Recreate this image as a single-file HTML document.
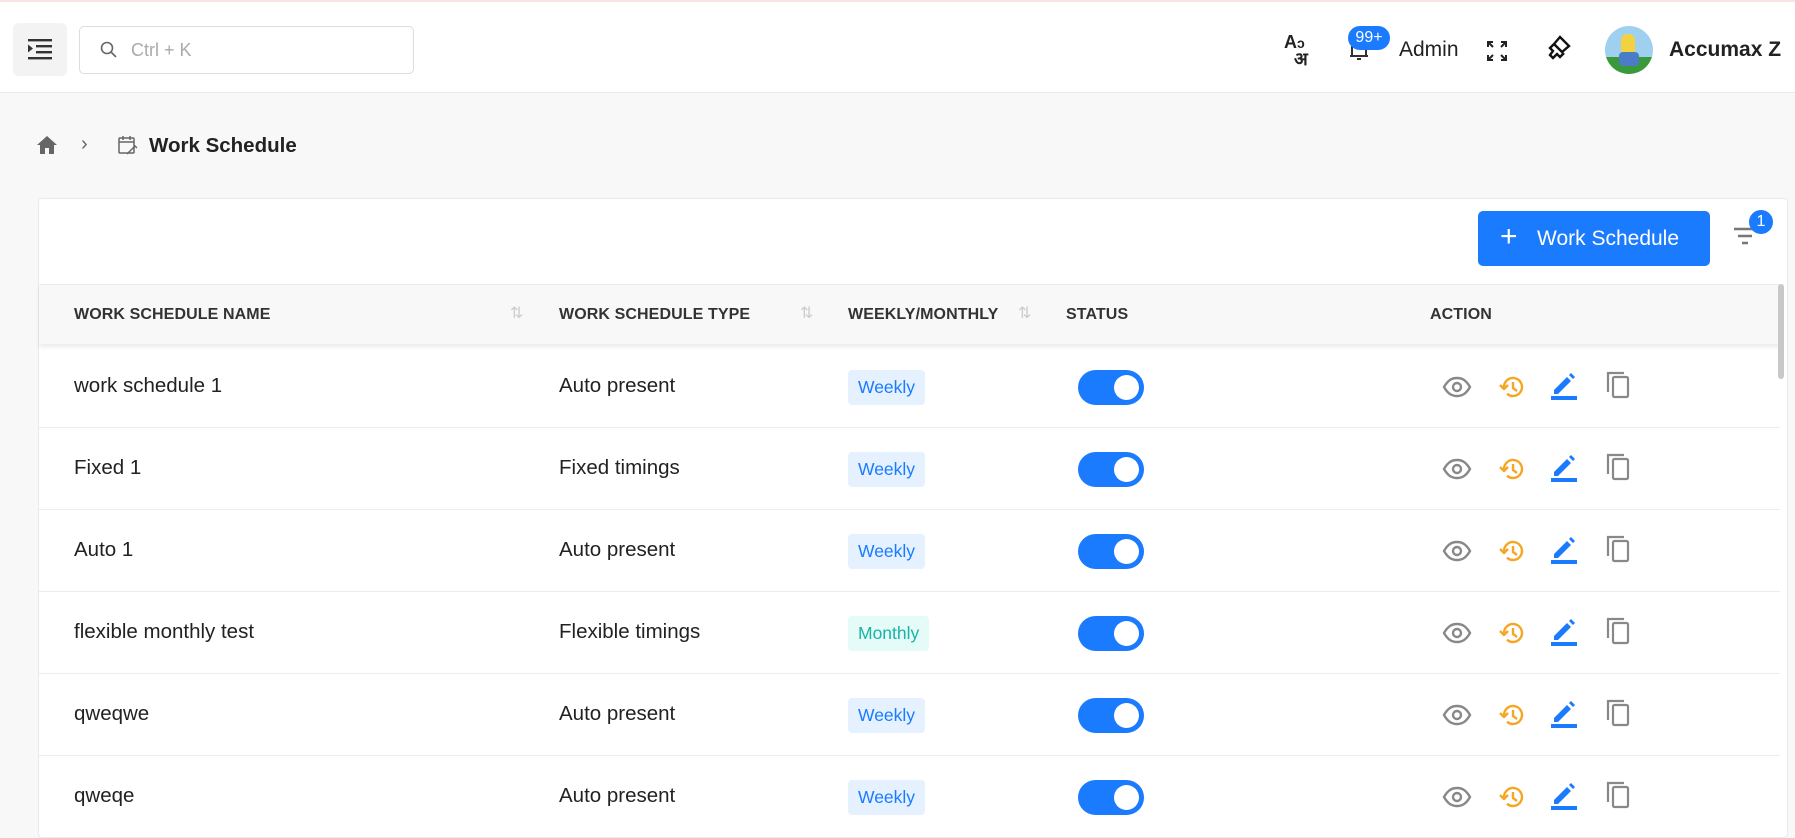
<!DOCTYPE html>
<html><head><meta charset="utf-8"><style>
*{box-sizing:border-box;margin:0;padding:0}
body{width:1795px;height:823px;overflow:hidden;background:#f8f8f8;font-family:"Liberation Sans",sans-serif;color:#222;position:relative}
.abs{position:absolute}
header{position:absolute;left:0;top:0;width:1795px;height:93px;background:#fff;border-top:2px solid #fbe3e3;border-bottom:1px solid #ececec}
.menu{left:13px;top:21px;width:54px;height:53px;background:#f3f3f3;border-radius:5px}
.search{left:79px;top:24px;width:335px;height:48px;border:1px solid #ddd;border-radius:5px;background:#fff}
.search span{position:absolute;left:51px;top:13px;font-size:18px;color:#aaa}
.hdtxt{font-size:21px;color:#222}
.card{left:38px;top:198px;width:1750px;height:640px;background:#fff;border:1px solid #e6e9ee;border-radius:4px}
.btn{left:1478px;top:211px;width:232px;height:55px;background:#1a7bff;border-radius:5px;color:#fff;font-size:20px}
.thead{left:39px;top:284px;width:1741px;height:60px;background:#f8f8f8;box-shadow:0 3px 4px rgba(0,0,0,.08);border-top:1px solid #ececec}
.th{position:absolute;top:21px;font-size:16px;font-weight:bold;color:#333;letter-spacing:.1px}
.sort{position:absolute;top:18px;color:#ccc;font-size:16px}
.row{position:absolute;left:39px;width:1741px;height:82px;border-bottom:1px solid #ececec}
.td{position:absolute;top:28px;font-size:20.5px;color:#222}
.pill{position:absolute;left:809px;top:24px;height:35px;padding:0 10px;line-height:35px;font-size:17.5px;border-radius:4px;background:#e5f1ff;color:#1a7bff}
.pill.m{background:#e4fbf8;color:#19b5a5}
.tog{position:absolute;left:1039px;top:24px;width:66px;height:35px;border-radius:18px;background:#1a7bff}
.tog:after{content:"";position:absolute;right:5px;top:5px;width:25px;height:25px;border-radius:50%;background:#fff}
.ic{position:absolute;top:27px}
</style></head><body>
<header>
<div class="abs menu"><svg class="abs" style="left:14px;top:14px" width="26" height="24" viewBox="0 0 26 24"><rect x="1" y="2" width="24" height="2.4" fill="#333"/><rect x="9" y="8" width="16" height="2.4" fill="#333"/><rect x="9" y="14" width="16" height="2.4" fill="#333"/><rect x="1" y="20" width="24" height="2.4" fill="#333"/><path d="M1 7.5l5 4-5 4z" fill="#333"/></svg></div>
<div class="abs search"><svg class="abs" style="left:20px;top:14px" width="18" height="18" viewBox="0 0 18 18"><circle cx="7" cy="7" r="5.5" stroke="#666" stroke-width="1.6" fill="none"/><path d="M11 11l5 5" stroke="#666" stroke-width="1.6"/></svg><span>Ctrl + K</span></div>
<div class="abs" style="left:1284px;top:32px;font-size:18px;font-weight:bold;color:#222;line-height:16px">A<span style="font-size:14px">ͻ</span><br><span style="margin-left:10px">अ</span></div>
<svg class="abs" style="left:1348px;top:36px" width="22" height="24" viewBox="0 0 22 24"><path d="M4 18V9a7 7 0 0 1 14 0v9zM2 18h18M9 21h4" stroke="#333" stroke-width="2" fill="none"/></svg>
<div class="abs" style="left:1348px;top:24px;width:42px;height:24px;border-radius:12px;background:#1a7bff;color:#fff;font-size:16px;text-align:center;line-height:24px">99+</div>
<div class="abs hdtxt" style="left:1399px;top:36px">Admin</div>
<svg class="abs" style="left:1486px;top:38px" width="22" height="22" viewBox="0 0 22 22" stroke="#222" stroke-width="2" fill="none"><path d="M2 7V2h5M2 2l5 5M20 7V2h-5M20 2l-5 5M2 15v5h5M2 20l5-5M20 15v5h-5M20 20l-5-5"/></svg>
<svg class="abs" style="left:1546px;top:32px" width="26" height="28" viewBox="0 0 26 28" stroke="#111" stroke-width="2.4" fill="none"><path d="M14 3l9 9-7 6-8-8zM8 10l-4 4 3 3-3 4 3 3 4-4 3 3 4-4"/></svg>
<div class="abs" style="left:1605px;top:24px;width:48px;height:48px;border-radius:50%;background:linear-gradient(#9fd0f0 65%,#3a9a3a 65%);overflow:hidden"><div class="abs" style="left:16px;top:8px;width:14px;height:28px;background:#f3d240;border-radius:6px"></div><div class="abs" style="left:14px;top:26px;width:20px;height:14px;background:#4a7cc8;border-radius:4px"></div></div>
<div class="abs hdtxt" style="left:1669px;top:36px;font-weight:bold;font-size:21px">Accumax Z</div>
</header>
<svg class="abs" style="left:36px;top:135px" width="22" height="20" viewBox="0 0 22 20"><path d="M11 1L1 10h3v9h5v-6h4v6h5v-9h3z" fill="#666"/></svg>
<div class="abs" style="left:81px;top:133px;color:#666;font-size:20px">&#x203A;</div>
<svg class="abs" style="left:117px;top:134px" width="22" height="22" viewBox="0 0 22 22" stroke="#666" stroke-width="1.5" fill="none"><rect x="2" y="4" width="15" height="15" rx="1"/><path d="M6 2v4M13 2v4M2 8h15M10 20l8-8 2 2"/></svg>
<div class="abs" style="left:149px;top:134px;font-size:20.5px;font-weight:bold;color:#222">Work Schedule</div>
<div class="abs card"></div>
<div class="abs btn"><span class="abs" style="left:22px;top:9px;font-size:30px;font-weight:300;line-height:34px">+</span><span class="abs" style="left:59px;top:16px;font-size:21px">Work Schedule</span></div>
<svg class="abs" style="left:1733px;top:225px" width="24" height="24" viewBox="0 0 24 24"><path d="M1 4h22M5 11h14M9 18h6" stroke="#777" stroke-width="2.4"/></svg>
<div class="abs" style="left:1749px;top:210px;width:24px;height:24px;border-radius:50%;background:#1a7bff;color:#fff;font-size:16px;text-align:center;line-height:24px">1</div>
<div class="abs thead">
<div class="th" style="left:35px">WORK SCHEDULE NAME</div><div class="sort" style="left:471px">⇅</div>
<div class="th" style="left:520px">WORK SCHEDULE TYPE</div><div class="sort" style="left:761px">⇅</div>
<div class="th" style="left:809px">WEEKLY/MONTHLY</div><div class="sort" style="left:979px">⇅</div>
<div class="th" style="left:1027px">STATUS</div>
<div class="th" style="left:1391px">ACTION</div>
</div>
<div class="abs" style="left:1778px;top:284px;width:6px;height:95px;background:#c8c8c8;border-radius:3px"></div>
<div id="rows"></div>
<script>
var d=[["work schedule 1","Auto present","Weekly"],["Fixed 1","Fixed timings","Weekly"],["Auto 1","Auto present","Weekly"],["flexible monthly test","Flexible timings","Monthly"],["qweqwe","Auto present","Weekly"],["qweqe","Auto present","Weekly"]];
var h="";
var icons='<svg class="ic" style="left:1403px" width="30" height="28" viewBox="0 0 30 28"><path d="M2 14C6 7 10 5 15 5s9 2 13 9c-4 7-8 9-13 9S6 21 2 14z" stroke="#888" stroke-width="2.4" fill="none"/><circle cx="15" cy="14" r="4" stroke="#888" stroke-width="2.4" fill="none"/></svg>'+
'<svg class="ic" style="left:1459px" width="28" height="28" viewBox="0 0 28 28" fill="none" stroke="#f5a623" stroke-width="2.4"><path d="M6 14a9 9 0 1 1 3 6.7"/><path d="M2 12l4 4 4-4" stroke-linejoin="round"/><path d="M15 9v6l4 3"/></svg>'+
'<svg class="ic" style="left:1511px;top:23px" width="28" height="32" viewBox="0 0 28 32"><path d="M4 21l13-13 4 4-13 13H4zM19 6l2-2 4 4-2 2z" fill="#1a7bff"/><rect x="1" y="27" width="26" height="4" fill="#1a7bff"/></svg>'+
'<svg class="ic" style="left:1566px;top:24px" width="26" height="30" viewBox="0 0 26 30" fill="none" stroke="#888" stroke-width="2.2"><path d="M3 22V3h16"/><rect x="8" y="7" width="15" height="20" rx="1.5"/></svg>';
d.forEach(function(r,i){h+='<div class="row" style="top:'+(346+i*82)+'px"><div class="td" style="left:35px">'+r[0]+'</div><div class="td" style="left:520px">'+r[1]+'</div><div class="pill'+(r[2]=="Monthly"?" m":"")+'">'+r[2]+'</div><div class="tog"></div>'+icons+'</div>';});
document.getElementById("rows").innerHTML=h;
</script>
</body></html>
